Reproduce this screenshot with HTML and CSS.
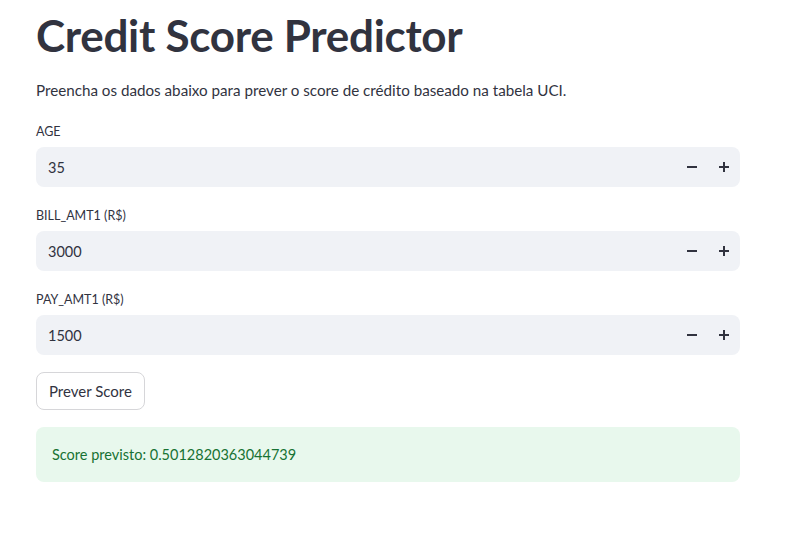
FILE: index.html
```html
<!DOCTYPE html>
<html lang="pt">
<head>
<meta charset="utf-8">
<title>Credit Score Predictor</title>
<link rel="stylesheet" href="styles.css">
</head>
<body>
<main class="page">
  <h1 class="title">Credit Score Predictor</h1>
  <p class="intro">Preencha os dados abaixo para prever o score de crédito baseado na tabela UCI.</p>

  <div class="field first">
    <label class="label">AGE</label>
    <div class="numinput">
      <span class="value">35</span>
      <span class="step">
        <svg width="10" height="10" viewBox="0 0 10 10"><rect x="0" y="4" width="10" height="2" fill="#31333f"/></svg>
      </span>
      <span class="step">
        <svg width="10" height="10" viewBox="0 0 10 10"><rect x="0" y="4" width="10" height="2" fill="#31333f"/><rect x="4" y="0" width="2" height="10" fill="#31333f"/></svg>
      </span>
    </div>
  </div>

  <div class="field">
    <label class="label">BILL_AMT1 (R$)</label>
    <div class="numinput">
      <span class="value">3000</span>
      <span class="step">
        <svg width="10" height="10" viewBox="0 0 10 10"><rect x="0" y="4" width="10" height="2" fill="#31333f"/></svg>
      </span>
      <span class="step">
        <svg width="10" height="10" viewBox="0 0 10 10"><rect x="0" y="4" width="10" height="2" fill="#31333f"/><rect x="4" y="0" width="2" height="10" fill="#31333f"/></svg>
      </span>
    </div>
  </div>

  <div class="field">
    <label class="label">PAY_AMT1 (R$)</label>
    <div class="numinput">
      <span class="value">1500</span>
      <span class="step">
        <svg width="10" height="10" viewBox="0 0 10 10"><rect x="0" y="4" width="10" height="2" fill="#31333f"/></svg>
      </span>
      <span class="step">
        <svg width="10" height="10" viewBox="0 0 10 10"><rect x="0" y="4" width="10" height="2" fill="#31333f"/><rect x="4" y="0" width="2" height="10" fill="#31333f"/></svg>
      </span>
    </div>
  </div>

  <button class="btn">Prever Score</button>

  <div class="alert">Score previsto: 0.5012820363044739</div>
</main>
</body>
</html>
```

FILE: styles.css
```css
* { box-sizing: border-box; }
html, body { margin: 0; padding: 0; background: #ffffff; }
body {
  font-family: "Lato", "Liberation Sans", sans-serif;
  color: #31333f;
}
.page {
  width: 704px;
  margin-left: 36px;
  display: flex;
  flex-direction: column;
}
.title {
  margin: 0;
  padding-top: 9px;
  font-size: 44px;
  line-height: 52px;
  font-weight: 700;
  letter-spacing: -0.3px;
}
.intro {
  margin: 17px 0 0 0;
  font-size: 15.2px;
  line-height: 24px;
}
.field {
  display: flex;
  flex-direction: column;
  margin-top: 21px;
}
.field.first { margin-top: 22px; }
.label {
  font-size: 12.5px;
  line-height: 16px;
  margin-bottom: 7px;
}
.numinput {
  height: 40px;
  background: #f0f2f6;
  border-radius: 8px;
  display: flex;
  align-items: center;
  padding-left: 12px;
}
.value {
  flex: 1;
  font-size: 14.5px;
}
.step {
  width: 32px;
  height: 40px;
  display: flex;
  align-items: center;
  justify-content: center;
}
.btn {
  align-self: flex-start;
  margin-top: 17px;
  height: 38px;
  padding: 0 12px;
  background: #ffffff;
  border: 1px solid #d6d6d9;
  border-radius: 8px;
  font-family: inherit;
  font-size: 15px;
  color: #31333f;
}
.alert {
  margin-top: 17px;
  height: 55px;
  background: #e8f8ed;
  border-radius: 8px;
  color: #177233;
  font-size: 14.5px;
  display: flex;
  align-items: center;
  padding-left: 16px;
}
```
